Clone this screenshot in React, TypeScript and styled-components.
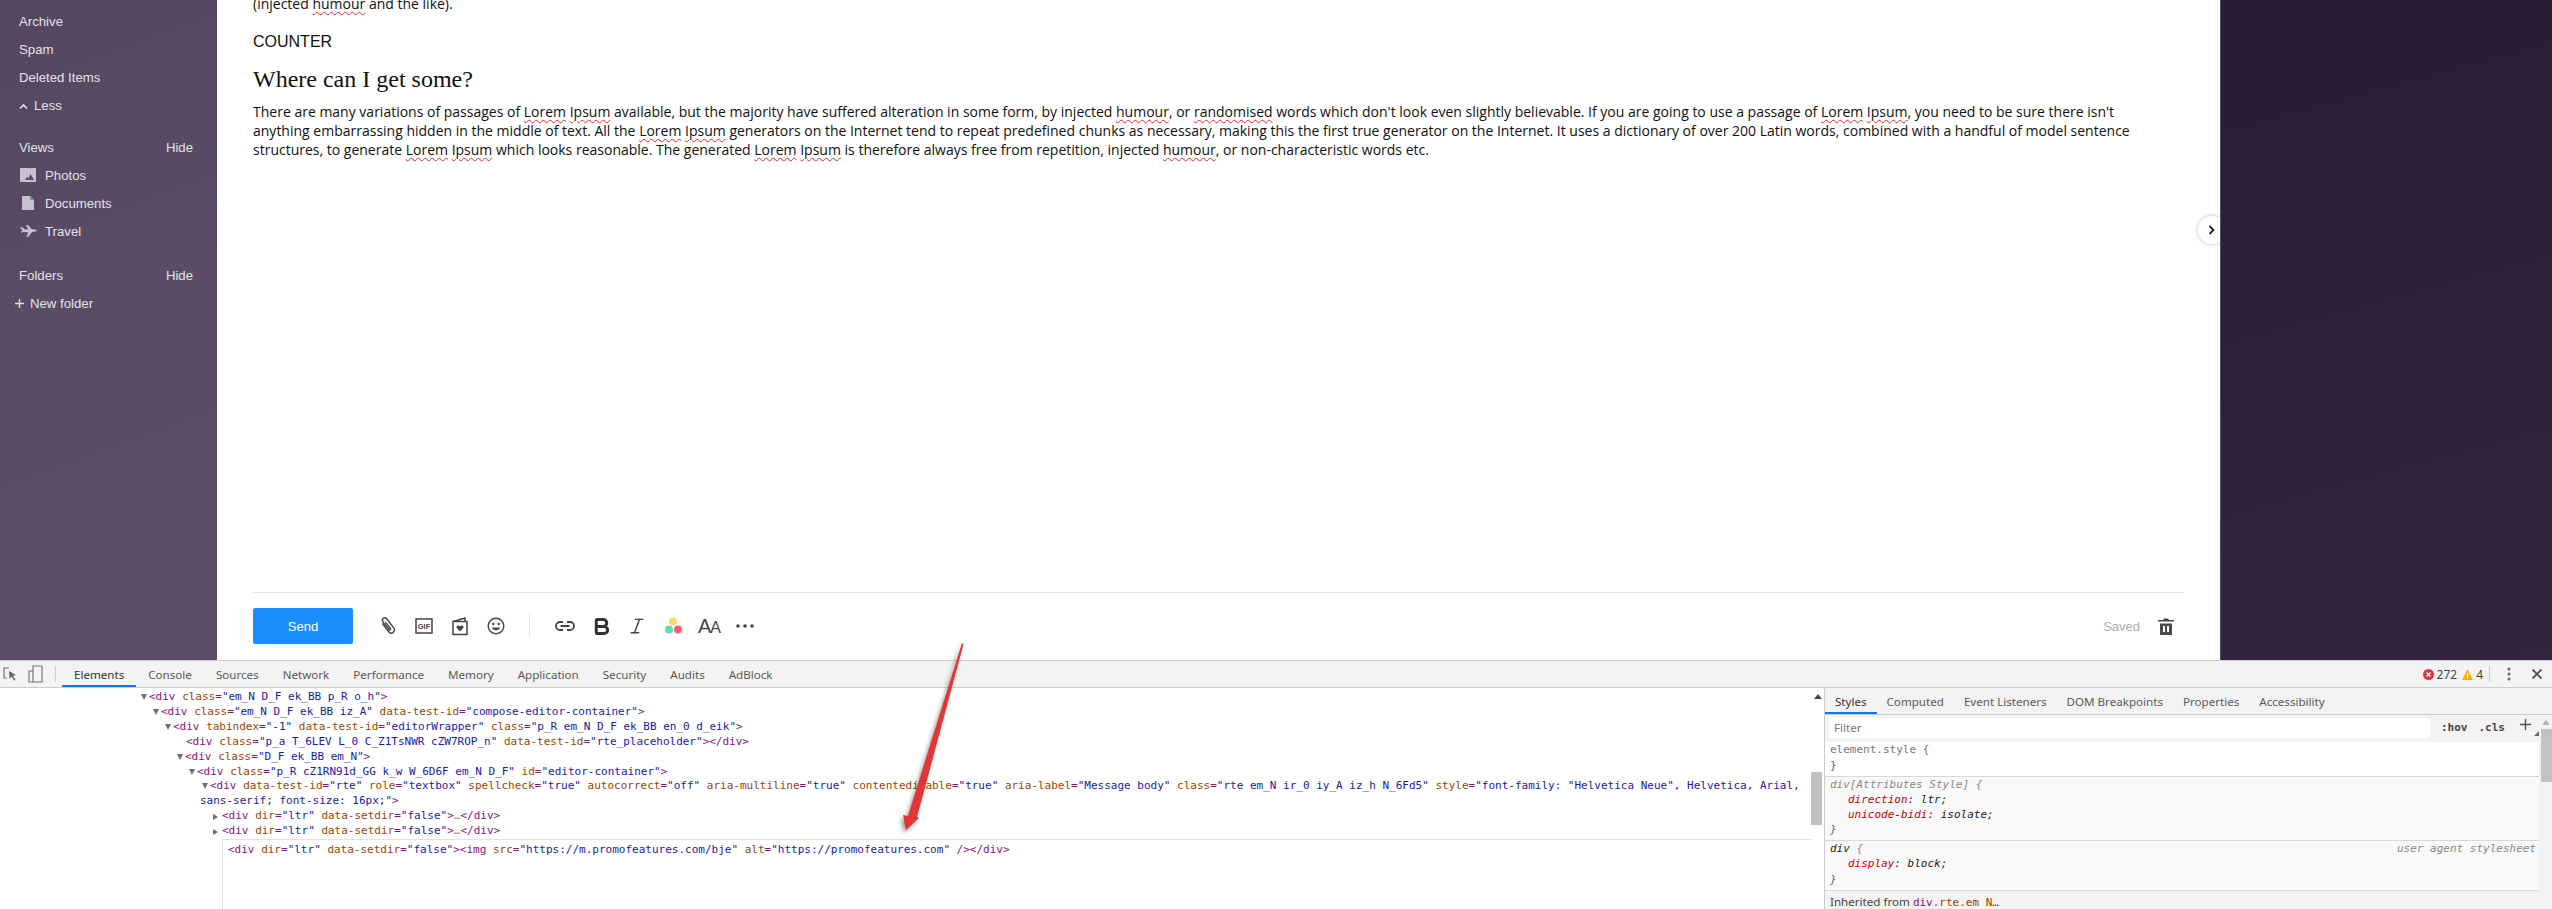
import styled, { createGlobalStyle } from 'styled-components';
import { Bold, Italic } from 'lucide-react';

const GlobalStyle = createGlobalStyle`
    html, body {
        margin: 0;
        padding: 0;
        overflow: hidden;
        background: #fff;
        font-family: "Liberation Sans", Arial, sans-serif;
    }
`;

const Page = styled.div`
    position: relative;
    display: flex;
    flex-direction: column;
    width: 2552px;
    height: 909px;
    overflow: hidden;
`;

const Workspace = styled.div`
    display: flex;
    height: 660px;
    flex: none;
`;

/* left folder list */
const Sidebar = styled.nav`
    width: 217px;
    flex: none;
    box-sizing: border-box;
    padding-top: 7px;
    background: linear-gradient(160deg, #54475f 0%, #5a4c66 45%, #5b4f68 100%);
    color: #e4e1e8;
    font-size: 13.2px;
`;

const NavGroup = styled.div<{ $gap?: number }>`
    margin-bottom: ${p => p.$gap ?? 0}px;
`;

const NavRow = styled.div<{ $left?: number }>`
    display: flex;
    align-items: center;
    height: 28px;
    padding: 0 24px 0 ${p => p.$left ?? 19}px;
`;

const NavIcon = styled.span`
    display: flex;
    justify-content: center;
    width: 18px;
    margin-right: 8px;
`;

const HideLink = styled.span`
    margin-left: auto;
`;

const Main = styled.main`
    position: relative;
    display: flex;
    flex-direction: column;
    flex: 1;
    min-width: 0;
    background: #fff;
`;

const Letter = styled.div`
    flex: 1;
    padding: 0 36px;
    color: #111;
    overflow: hidden;
`;

const Paragraph = styled.p`
    max-width: 1910px;
    margin: 0;
    font-family: "Open Sans", "Noto Sans", sans-serif;
    font-size: 14px;
    line-height: 19px;
`;

const FirstLine = styled(Paragraph)`
    margin-top: -6px;
`;

const Plain = styled.div`
    margin-top: 20px;
    font-size: 16px;
    line-height: 18px;
`;

const Heading = styled.h2`
    margin: 14px 0 9px;
    font-family: "Liberation Serif", "Times New Roman", serif;
    font-size: 24px;
    font-weight: 400;
    line-height: 28px;
`;

const Misspelt = styled.span`
    text-decoration: underline wavy #e0252b 1px;
    text-underline-offset: 2px;
`;

const Composer = styled.div`
    display: flex;
    align-items: center;
    height: 68px;
    margin: 0 36px;
    padding-bottom: 1px;
    box-sizing: border-box;
    border-top: 1px solid #e6e6e6;
`;

const SendButton = styled.button`
    width: 100px;
    height: 36px;
    margin-right: 17px;
    border: 0;
    border-radius: 2px;
    background: #1a8fff;
    color: #fff;
    font-family: inherit;
    font-size: 13px;
`;

const ToolSlot = styled.span`
    display: flex;
    align-items: center;
    justify-content: center;
    width: 36px;
    height: 36px;
    color: #444;
`;

const ToolDivider = styled.span`
    width: 1px;
    height: 24px;
    margin: 0 17px 0 15px;
    background: #e5e5e5;
`;

const SizeLetters = styled.span`
    display: flex;
    align-items: baseline;
    font-size: 20px;
    letter-spacing: -1px;
`;

const SmallLetter = styled.span`
    font-size: 16px;
`;

const SavedLabel = styled.span`
    margin-left: auto;
    margin-right: 8px;
    color: #a9adb8;
    font-size: 13px;
`;

const Collapse = styled.button`
    position: absolute;
    right: -6px;
    top: 216px;
    display: flex;
    align-items: center;
    justify-content: center;
    width: 28px;
    height: 28px;
    padding: 0;
    border: 0;
    border-radius: 50%;
    background: #fff;
    box-shadow: 0 0 4px rgba(0, 0, 0, 0.25);
`;

const Backdrop = styled.aside`
    position: relative;
    width: 332px;
    flex: none;
    border-left: 1px solid #55505f;
    box-sizing: border-box;
    background: linear-gradient(165deg, #2a1d33 0%, #2b2036 30%, #332540 100%);
`;

/* devtools */
const DevTools = styled.section`
    display: flex;
    flex-direction: column;
    flex: 1;
    min-height: 0;
    color: #333;
    font-family: "Noto Sans", "Open Sans", sans-serif;
    font-size: 11.6px;
`;

const TopBar = styled.div`
    display: flex;
    align-items: stretch;
    height: 28px;
    box-sizing: border-box;
    flex: none;
    border-top: 1px solid #ccc;
    border-bottom: 1px solid #ccc;
    background: #f3f3f3;
`;

const BarIcon = styled.span<{ $width: number }>`
    display: flex;
    align-items: center;
    justify-content: center;
    width: ${p => p.$width}px;
    flex: none;
`;

const BarDivider = styled.span`
    width: 1px;
    height: 16px;
    margin: 5px 6px 0 5px;
    background: #ccc;
`;

const Tab = styled.span<{ $active?: boolean; $pad: number }>`
    display: flex;
    align-items: center;
    padding: 0 ${p => p.$pad}px;
    color: ${p => (p.$active ? '#333' : '#5a5a5a')};
    box-shadow: ${p => (p.$active ? 'inset 0 -2px 0 #1a73e8' : 'none')};
`;

const Status = styled.div`
    display: flex;
    align-items: center;
    margin-left: auto;
    padding-right: 9px;
    color: #444;
    font-size: 12px;
`;

const StatusText = styled.span`
    margin: 0 5px 0 3px;
`;

const StatusDivider = styled.span`
    width: 1px;
    height: 16px;
    margin-left: 1px;
    background: #ccc;
`;

const StatusAction = styled.span<{ $left: number }>`
    display: flex;
    margin-left: ${p => p.$left}px;
`;

const Panels = styled.div`
    display: flex;
    flex: 1;
    min-height: 0;
`;

const ElementsPane = styled.div`
    display: flex;
    width: 1825px;
    flex: none;
    border-right: 1px solid #ccc;
    box-sizing: border-box;
    background: #fff;
`;

const Tree = styled.div`
    flex: 1;
    min-width: 0;
    padding-top: 2px;
    font-family: "DejaVu Sans Mono", "Liberation Mono", monospace;
    font-size: 11px;
    line-height: 14.9px;
`;

const TreeRow = styled.div<{ $level: number; $arrow?: 'open' | 'closed'; $wrapped?: boolean }>`
    padding-left: ${p => (p.$wrapped ? 200 : 150 + p.$level * 12)}px;
    text-indent: ${p => (p.$wrapped ? 11 : 0)}px;
    &::before {
        content: '';
        display: ${p => (p.$arrow ? 'inline-block' : 'none')};
        width: 0;
        height: 0;
        margin-left: -9px;
        margin-right: ${p => (p.$arrow === 'open' ? 2 : 4)}px;
        vertical-align: ${p => (p.$arrow === 'open' ? 0 : -1)}px;
        border-style: solid;
        border-color: transparent;
        ${p => p.$arrow === 'open'
            ? 'border-width: 6px 3.5px 0; border-top-color: #6e6e6e;'
            : 'border-width: 3.5px 0 3.5px 5px; border-left-color: #6e6e6e;'}
    }
`;

const EditBox = styled.div`
    height: 70px;
    margin-left: 222px;
    padding: 3px 0 0 5px;
    border-top: 1px solid #e2e2e2;
    border-left: 1px solid #e2e2e2;
`;

const TagText = styled.span`
    color: #881280;
`;

const AttrName = styled.span`
    color: #994500;
`;

const AttrValue = styled.span`
    color: #1a1aa6;
`;

const Muted = styled.span`
    color: #888;
`;

const Track = styled.div<{ $width: number }>`
    display: flex;
    flex-direction: column;
    align-items: flex-end;
    width: ${p => p.$width}px;
    flex: none;
`;

const TrackArrow = styled.span<{ $right: number; $top: number; $color: string }>`
    width: 0;
    height: 0;
    margin: ${p => p.$top}px ${p => p.$right}px 0 0;
    border-style: solid;
    border-width: 0 4px 5px;
    border-color: transparent transparent ${p => p.$color};
`;

const TrackThumb = styled.span<{ $top: number; $length: number; $right: number; $width: number }>`
    width: ${p => p.$width}px;
    height: ${p => p.$length}px;
    margin: ${p => p.$top}px ${p => p.$right}px 0 0;
    background: #c2c2c2;
`;

const StylesPane = styled.div`
    display: flex;
    flex-direction: column;
    flex: 1;
    min-width: 0;
    background: #f3f3f3;
`;

const SubTabs = styled.div`
    display: flex;
    height: 27px;
    flex: none;
    box-sizing: border-box;
    border-bottom: 1px solid #ccc;
`;

const SubTab = styled(Tab)`
    padding-top: 1px;
`;

const StylesBody = styled.div`
    display: flex;
    flex: 1;
    min-height: 0;
`;

const StylesMain = styled.div`
    flex: 1;
    min-width: 0;
`;

const FilterBar = styled.div`
    display: flex;
    align-items: center;
    height: 27px;
    box-sizing: border-box;
    padding: 2px 0 4px 4px;
`;

const FilterInput = styled.div`
    display: flex;
    align-items: center;
    width: 601px;
    height: 20px;
    box-sizing: border-box;
    padding-left: 5px;
    background: #fff;
    color: #777;
`;

const FilterAction = styled.span<{ $left: number }>`
    margin-left: ${p => p.$left}px;
    font-family: "DejaVu Sans Mono", monospace;
    font-size: 11px;
    font-weight: 700;
    color: #444;
`;

const PlusAction = styled.span`
    margin-left: 15px;
    display: flex;
`;

const Corner = styled.span`
    width: 0;
    height: 0;
    margin: 12px 0 0 3px;
    border-style: solid;
    border-width: 0 0 5px 5px;
    border-color: transparent transparent #666;
`;

const RuleBlock = styled.div<{ $shaded?: boolean }>`
    padding: 0 3px 3px 5px;
    border-bottom: 1px solid #d8d8d8;
    background: ${p => (p.$shaded ? '#f9f9f9' : '#fff')};
    font-family: "DejaVu Sans Mono", monospace;
    font-size: 11px;
`;

const Selector = styled.div<{ $italic?: boolean; $color: string }>`
    display: flex;
    justify-content: space-between;
    line-height: 16px;
    color: ${p => p.$color};
    font-style: ${p => (p.$italic ? 'italic' : 'normal')};
`;

const Declaration = styled.div`
    padding-left: 18px;
    line-height: 14.5px;
    font-style: italic;
    color: #222;
`;

const PropName = styled.span`
    color: #c80000;
`;

const Closing = styled.div<{ $italic?: boolean }>`
    line-height: 15px;
    color: #666;
    font-style: ${p => (p.$italic ? 'italic' : 'normal')};
`;

const UserAgent = styled.span`
    color: #888;
    font-style: italic;
`;

const Inherited = styled.div`
    padding: 2px 0 0 5px;
    line-height: 17px;
    color: #444;
`;

const InheritedCode = styled.span`
    font-family: "DejaVu Sans Mono", monospace;
    font-size: 11px;
`;

const Overlay = styled.svg`
    position: absolute;
    left: 890px;
    top: 630px;
    filter: drop-shadow(-2px 3px 2px rgba(0, 0, 0, 0.4));
    pointer-events: none;
`;

const ICON = '#c6c1cf';

const Attr = ({ name, value }: { name: string; value: string }) => (
    <>
        {' '}<AttrName>{name}</AttrName><TagText>=</TagText><AttrValue>"{value}"</AttrValue>
    </>
);

const App = () => {
    return (
        <Page>
            <GlobalStyle />
            <Workspace>
                <Sidebar>
                    <NavGroup $gap={14}>
                        <NavRow>Archive</NavRow>
                        <NavRow>Spam</NavRow>
                        <NavRow>Deleted Items</NavRow>
                        <NavRow>
                            <svg width="9" height="7" viewBox="0 0 9 7" style={{ marginRight: 6, marginTop: 2 }}>
                                <path d="M1 5.5 L4.5 2 L8 5.5" fill="none" stroke="#e4e1e8" strokeWidth="1.6" />
                            </svg>
                            Less
                        </NavRow>
                    </NavGroup>
                    <NavGroup $gap={16}>
                        <NavRow>Views<HideLink>Hide</HideLink></NavRow>
                        <NavRow>
                            <NavIcon>
                                <svg width="16" height="14" viewBox="0 0 16 14">
                                    <path fillRule="evenodd" fill={ICON} d="M0 0h16v14H0z M2 12h3l2-3.5 1.5 2 2-4.5 3.500 6z" />
                                </svg>
                            </NavIcon>
                            Photos
                        </NavRow>
                        <NavRow>
                            <NavIcon>
                                <svg width="12" height="14" viewBox="0 0 12 14">
                                    <path fill={ICON} d="M0 0h8l4 4v10H0z" />
                                    <path fill="#8f87a0" d="M8 0v4h4z" />
                                </svg>
                            </NavIcon>
                            Documents
                        </NavRow>
                        <NavRow>
                            <NavIcon>
                                <svg width="17" height="12" viewBox="0 0 17 12">
                                    <path fill={ICON} d="M0 2l3 .5 2 2 3-.2L6 0h2l4 4.200 3.500.3c1.500.3 1.500 1.700 0 2l-3.500.4L8 12H6.500l1.700-4.800L3 7l-1.500 1L1 7l1.300-1.500z" />
                                </svg>
                            </NavIcon>
                            Travel
                        </NavRow>
                    </NavGroup>
                    <NavGroup>
                        <NavRow>Folders<HideLink>Hide</HideLink></NavRow>
                        <NavRow $left={15}>
                            <svg width="9" height="9" viewBox="0 0 9 9" style={{ marginRight: 6 }}>
                                <path d="M4.5 0v9M0 4.500h9" stroke="#e4e1e8" strokeWidth="1.400" />
                            </svg>
                            New folder
                        </NavRow>
                    </NavGroup>
                </Sidebar>
                <Main>
                    <Letter>
                        <FirstLine>(injected <Misspelt>humour</Misspelt> and the like).</FirstLine>
                        <Plain>COUNTER</Plain>
                        <Heading>Where can I get some?</Heading>
                        <Paragraph>
                            There are many variations of passages of <Misspelt>Lorem</Misspelt> <Misspelt>Ipsum</Misspelt> available, but the majority have suffered alteration in some form, by injected <Misspelt>humour</Misspelt>, or <Misspelt>randomised</Misspelt> words which don't look even slightly believable. If you are going to use a passage of <Misspelt>Lorem</Misspelt> <Misspelt>Ipsum</Misspelt>, you need to be sure there isn't anything embarrassing hidden in the middle of text. All the <Misspelt>Lorem</Misspelt> <Misspelt>Ipsum</Misspelt> generators on the Internet tend to repeat predefined chunks as necessary, making this the first true generator on the Internet. It uses a dictionary of over 200 Latin words, combined with a handful of model sentence structures, to generate <Misspelt>Lorem</Misspelt> <Misspelt>Ipsum</Misspelt> which looks reasonable. The generated <Misspelt>Lorem</Misspelt> <Misspelt>Ipsum</Misspelt> is therefore always free from repetition, injected <Misspelt>humour</Misspelt>, or non-characteristic words etc.
                        </Paragraph>
                    </Letter>
                    <Composer>
                        <SendButton>Send</SendButton>
                        <ToolSlot>
                            <svg width="20" height="22" viewBox="0 0 20 22" fill="none" stroke="#444" strokeWidth="1.400">
                                <path transform="rotate(-38 10 11)" d="M7 6v10a3.200 3.200 0 0 0 6.400 0V4.500a2.400 2.400 0 0 0-4.800 0V14.500a.9.9 0 0 0 1.800 0V7" strokeLinecap="round" />
                            </svg>
                        </ToolSlot>
                        <ToolSlot>
                            <svg width="18" height="16" viewBox="0 0 18 16">
                                <rect x="1" y="1" width="16" height="14" fill="#fff" stroke="#444" strokeWidth="1.500" />
                                <text x="9" y="11" textAnchor="middle" fontFamily="Liberation Sans" fontWeight="700" fontSize="7.500" fill="#444">GIF</text>
                            </svg>
                        </ToolSlot>
                        <ToolSlot>
                            <svg width="16" height="19" viewBox="0 0 16 19">
                                <path d="M1 4.500h14v13H1z M1 4.500 L13 1v3.500" fill="none" stroke="#444" strokeWidth="1.500" />
                                <path d="M8 14.500 L4.800 11c-1.300-1.800 1.800-3.500 3.200-1.500 1.400-2 4.500-.3 3.200 1.500z" fill="#444" />
                            </svg>
                        </ToolSlot>
                        <ToolSlot>
                            <svg width="18" height="18" viewBox="0 0 18 18">
                                <circle cx="9" cy="9" r="7.800" fill="none" stroke="#444" strokeWidth="1.400" />
                                <circle cx="6.300" cy="7" r="1.200" fill="#444" />
                                <circle cx="11.700" cy="7" r="1.200" fill="#444" />
                                <path d="M5 10.500h8c-.5 3.500-7.500 3.500-8 0z" fill="#444" />
                            </svg>
                        </ToolSlot>
                        <ToolDivider />
                        <ToolSlot>
                            <svg width="20" height="10" viewBox="0 0 20 10" fill="none" stroke="#444" strokeWidth="1.800">
                                <path d="M8 1H5a4 4 0 0 0 0 8h3 M12 1h3a4 4 0 0 1 0 8h-3 M5.500 5h9" />
                            </svg>
                        </ToolSlot>
                        <ToolSlot><Bold size={21} strokeWidth={3.4} color="#333" /></ToolSlot>
                        <ToolSlot><Italic size={20} strokeWidth={1.700} color="#444" /></ToolSlot>
                        <ToolSlot>
                            <svg width="18" height="18" viewBox="0 0 18 18">
                                <circle cx="9" cy="4.500" r="4" fill="#ffd966" />
                                <circle cx="5" cy="12.500" r="4" fill="#5fdcc0" />
                                <circle cx="14" cy="12.500" r="4" fill="#fb6068" />
                            </svg>
                        </ToolSlot>
                        <ToolSlot>
                            <SizeLetters>A<SmallLetter>A</SmallLetter></SizeLetters>
                        </ToolSlot>
                        <ToolSlot>
                            <svg width="18" height="4" viewBox="0 0 18 4" fill="#444">
                                <circle cx="2" cy="2" r="1.800" />
                                <circle cx="9" cy="2" r="1.800" />
                                <circle cx="16" cy="2" r="1.800" />
                            </svg>
                        </ToolSlot>
                        <SavedLabel>Saved</SavedLabel>
                        <ToolSlot>
                            <svg width="16" height="17" viewBox="0 0 16 17">
                                <path d="M0 2h5.500V0.500h5V2H16v1.500H0z" fill="#444" />
                                <path fillRule="evenodd" d="M2 5.500h12V17H2z M5 8v6h2V8z M9 8v6h2V8z" fill="#4a4a4a" />
                            </svg>
                        </ToolSlot>
                    </Composer>
                    <Collapse aria-label="Expand">
                        <svg width="8" height="10" viewBox="0 0 8 10">
                            <path d="M1.500 1 L5.500 5 L1.500 9" fill="none" stroke="#222" strokeWidth="1.800" />
                        </svg>
                    </Collapse>
                </Main>
                <Backdrop />
            </Workspace>
            <DevTools>
                <TopBar>
                    <BarIcon $width={20}>
                        <svg width="14" height="14" viewBox="0 0 14 14" fill="none">
                            <path d="M6 1H1v10h3" stroke="#777" strokeWidth="1.200" />
                            <path d="M6 4l7 4-3 .8L12.500 13l-1.500.8L8.700 9.600 6.500 12z" fill="#666" />
                        </svg>
                    </BarIcon>
                    <BarIcon $width={30}>
                        <svg width="15" height="18" viewBox="0 0 15 18" fill="none" stroke="#777" strokeWidth="1.200">
                            <path d="M5 1h9v16H1V6h4z M5 1v4 M5 6v11" />
                        </svg>
                    </BarIcon>
                    <BarDivider />
                    <Tab $pad={12} $active>Elements</Tab>
                    <Tab $pad={12}>Console</Tab>
                    <Tab $pad={12}>Sources</Tab>
                    <Tab $pad={12}>Network</Tab>
                    <Tab $pad={12}>Performance</Tab>
                    <Tab $pad={12}>Memory</Tab>
                    <Tab $pad={12}>Application</Tab>
                    <Tab $pad={12}>Security</Tab>
                    <Tab $pad={12}>Audits</Tab>
                    <Tab $pad={12}>AdBlock</Tab>
                    <Status>
                        <svg width="11" height="11" viewBox="0 0 11 11">
                            <circle cx="5.500" cy="5.500" r="5.500" fill="#e0353b" />
                            <path d="M3.500 3.500l4 4M7.500 3.500l-4 4" stroke="#fff" strokeWidth="1.300" />
                        </svg>
                        <StatusText>272</StatusText>
                        <svg width="11" height="11" viewBox="0 0 11 11">
                            <path d="M5.500 0L11 11H0z" fill="#f0b400" />
                            <path d="M5.500 4v4M5.500 8.800v1.200" stroke="#fff" strokeWidth="1.200" />
                        </svg>
                        <StatusText>4</StatusText>
                        <StatusDivider />
                        <StatusAction $left={17}>
                            <svg width="4" height="14" viewBox="0 0 4 14" fill="#666">
                                <circle cx="2" cy="2" r="1.500" />
                                <circle cx="2" cy="7" r="1.500" />
                                <circle cx="2" cy="12" r="1.500" />
                            </svg>
                        </StatusAction>
                        <StatusAction $left={20}>
                            <svg width="12" height="12" viewBox="0 0 12 12">
                                <path d="M1.500 1.500l9 9M10.500 1.500l-9 9" stroke="#555" strokeWidth="1.800" />
                            </svg>
                        </StatusAction>
                    </Status>
                </TopBar>
                <Panels>
                    <ElementsPane>
                        <Tree>
                            <TreeRow $level={0} $arrow="open"><TagText>&lt;div</TagText><Attr name="class" value="em_N D_F ek_BB p_R o_h" /><TagText>&gt;</TagText></TreeRow>
                            <TreeRow $level={1} $arrow="open"><TagText>&lt;div</TagText><Attr name="class" value="em_N D_F ek_BB iz_A" /><Attr name="data-test-id" value="compose-editor-container" /><TagText>&gt;</TagText></TreeRow>
                            <TreeRow $level={2} $arrow="open"><TagText>&lt;div</TagText><Attr name="tabindex" value="-1" /><Attr name="data-test-id" value="editorWrapper" /><Attr name="class" value="p_R em_N D_F ek_BB en_0 d_eik" /><TagText>&gt;</TagText></TreeRow>
                            <TreeRow $level={3}><TagText>&lt;div</TagText><Attr name="class" value="p_a T_6LEV L_0 C_Z1TsNWR cZW7ROP_n" /><Attr name="data-test-id" value="rte_placeholder" /><TagText>&gt;&lt;/div&gt;</TagText></TreeRow>
                            <TreeRow $level={3} $arrow="open"><TagText>&lt;div</TagText><Attr name="class" value="D_F ek_BB em_N" /><TagText>&gt;</TagText></TreeRow>
                            <TreeRow $level={4} $arrow="open"><TagText>&lt;div</TagText><Attr name="class" value="p_R cZ1RN91d_GG k_w W_6D6F em_N D_F" /><Attr name="id" value="editor-container" /><TagText>&gt;</TagText></TreeRow>
                            <TreeRow $level={5} $arrow="open" $wrapped><TagText>&lt;div</TagText><Attr name="data-test-id" value="rte" /><Attr name="role" value="textbox" /><Attr name="spellcheck" value="true" /><Attr name="autocorrect" value="off" /><Attr name="aria-multiline" value="true" /><Attr name="contenteditable" value="true" /><Attr name="aria-label" value="Message body" /><Attr name="class" value="rte em_N ir_0 iy_A iz_h N_6Fd5" /><Attr name="style" value={'font-family: "Helvetica Neue", Helvetica, Arial, sans-serif; font-size: 16px;'} /><TagText>&gt;</TagText></TreeRow>
                            <TreeRow $level={6} $arrow="closed"><TagText>&lt;div</TagText><Attr name="dir" value="ltr" /><Attr name="data-setdir" value="false" /><TagText>&gt;</TagText><Muted>…</Muted><TagText>&lt;/div&gt;</TagText></TreeRow>
                            <TreeRow $level={6} $arrow="closed"><TagText>&lt;div</TagText><Attr name="dir" value="ltr" /><Attr name="data-setdir" value="false" /><TagText>&gt;</TagText><Muted>…</Muted><TagText>&lt;/div&gt;</TagText></TreeRow>
                            <EditBox><TagText>&lt;div</TagText><Attr name="dir" value="ltr" /><Attr name="data-setdir" value="false" /><TagText>&gt;&lt;img</TagText><Attr name="src" value="https://m.promofeatures.com/bje" /><Attr name="alt" value="https://promofeatures.com" /><TagText> /&gt;&lt;/div&gt;</TagText></EditBox>
                        </Tree>
                        <Track $width={13}>
                            <TrackArrow $top={6} $right={2} $color="#444" />
                            <TrackThumb $top={73} $length={53} $right={2} $width={11} />
                        </Track>
                    </ElementsPane>
                    <StylesPane>
                        <SubTabs>
                            <SubTab $pad={10} $active>Styles</SubTab>
                            <SubTab $pad={10}>Computed</SubTab>
                            <SubTab $pad={10}>Event Listeners</SubTab>
                            <SubTab $pad={10}>DOM Breakpoints</SubTab>
                            <SubTab $pad={10}>Properties</SubTab>
                            <SubTab $pad={10}>Accessibility</SubTab>
                        </SubTabs>
                        <StylesBody>
                            <StylesMain>
                                <FilterBar>
                                    <FilterInput>Filter</FilterInput>
                                    <FilterAction $left={11}>:hov</FilterAction>
                                    <FilterAction $left={11}>.cls</FilterAction>
                                    <PlusAction>
                                        <svg width="11" height="11" viewBox="0 0 11 11">
                                            <path d="M5.500 0v11M0 5.500h11" stroke="#555" strokeWidth="1.400" />
                                        </svg>
                                        <Corner />
                                    </PlusAction>
                                </FilterBar>
                                <RuleBlock>
                                    <Selector $color="#777">element.style {'{'}</Selector>
                                    <Closing>{'}'}</Closing>
                                </RuleBlock>
                                <RuleBlock $shaded>
                                    <Selector $italic $color="#888">div[Attributes Style] {'{'}</Selector>
                                    <Declaration><PropName>direction</PropName>: ltr;</Declaration>
                                    <Declaration><PropName>unicode-bidi</PropName>: isolate;</Declaration>
                                    <Closing $italic>{'}'}</Closing>
                                </RuleBlock>
                                <RuleBlock $shaded>
                                    <Selector $italic $color="#222"><span>div <Muted>{'{'}</Muted></span><UserAgent>user agent stylesheet</UserAgent></Selector>
                                    <Declaration><PropName>display</PropName>: block;</Declaration>
                                    <Closing $italic>{'}'}</Closing>
                                </RuleBlock>
                                <Inherited>Inherited from <InheritedCode><TagText>div</TagText><AttrName>.rte.em N…</AttrName></InheritedCode></Inherited>
                            </StylesMain>
                            <Track $width={13}>
                                <TrackArrow $top={5} $right={2} $color="#b5b5b5" />
                                <TrackThumb $top={4} $length={53} $right={0} $width={11} />
                            </Track>
                        </StylesBody>
                    </StylesPane>
                </Panels>
            </DevTools>
            <Overlay width="90" height="210" viewBox="0 0 90 210">
                <path d="M72 13 L73.500 14 L27 187 L29 188 L16 200 L13 185 L18 186 Z" fill="#e23535" />
            </Overlay>
        </Page>
    );
};

export default App;
